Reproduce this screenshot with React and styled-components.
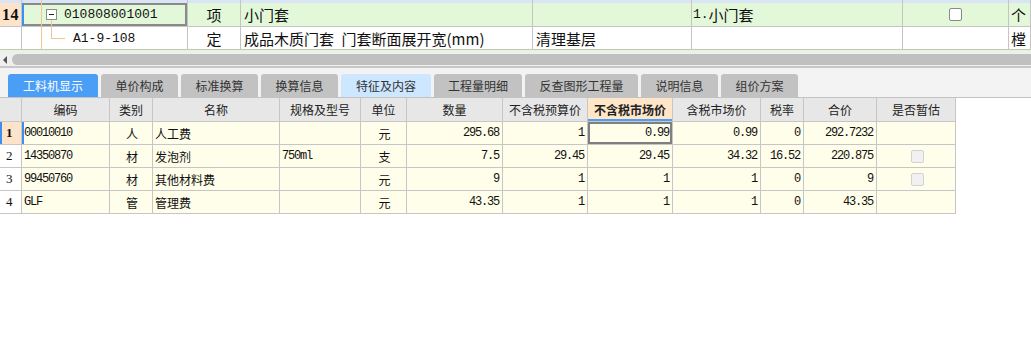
import React from 'react';
import styled, { createGlobalStyle } from 'styled-components';

const CJK = `"Noto Sans CJK SC", "Noto Sans", sans-serif`;
const MONO = `"Liberation Mono", "Noto Sans CJK SC", monospace`;

const GlobalStyle = createGlobalStyle`
  html, body { margin: 0; padding: 0; background: #fff; }
  body { font-family: ${CJK}; color: #111; }
  * { box-sizing: border-box; }
`;

const Page = styled.div`
  width: 1031px;
  height: 349px;
  overflow: hidden;
  display: flex;
  flex-direction: column;
`;

/* ---------- upper tree table ---------- */

const TreeRow = styled.div`
  display: grid;
  grid-template-columns: 22px 166px 53px 292px 159px 211px 106px 1fr;
  height: ${p => p.$h}px;
  background: ${p => p.$bg || '#fff'};
`;

const TCell = styled.div`
  position: relative;
  display: flex;
  align-items: center;
  justify-content: ${p => p.$align || 'flex-start'};
  padding: 0 0 0 ${p => p.$pl ?? 3}px;
  border-right: 1px solid #c4c4c4;
  border-bottom: ${p => (p.$nb ? 'none' : '1px solid #c4c4c4')};
  font-size: 15px;
  white-space: nowrap;
  overflow: hidden;
`;

const RowNo = styled(TCell)`
  background: #fce3c9;
  font-family: "Liberation Serif", serif;
  font-weight: bold;
  font-size: 16px;
  letter-spacing: 0.5px;
  padding-left: 2px;
`;

const CodeCell = styled(TCell)`
  box-shadow: ${p => (p.$current ? 'inset 2px 0 0 #3d8ef2, inset 0 0 0 2px #8a8a8a' : 'none')};
`;

const Mono = styled.span`
  font-family: ${MONO};
  font-size: ${p => p.$size || 13}px;
  letter-spacing: ${p => p.$ls ?? 0}px;
`;

const Line = styled.span`
  position: absolute;
  left: ${p => p.$x}px;
  top: ${p => p.$y}px;
  width: ${p => p.$w}px;
  height: ${p => p.$h}px;
  background: #f6c58e;
`;

const Collapse = styled.span`
  position: absolute;
  left: 24px;
  top: 6px;
  width: 11px;
  height: 11px;
  border: 1px solid #8c8c8c;
  background: #fff;
  &::after {
    content: '';
    position: absolute;
    left: 2px;
    top: 4px;
    width: 5px;
    height: 1px;
    background: #222;
  }
`;

const CheckBox = styled.span`
  display: inline-block;
  width: 13px;
  height: 13px;
  border: 1px solid ${p => (p.$disabled ? '#d2d2d2' : '#8a8a8a')};
  border-radius: 2px;
  background: ${p => (p.$disabled ? '#f1f1f1' : '#fff')};
`;

const Peek = styled.div`
  height: 2px;
  background: #e3f8da;
`;

const HScroll = styled.div`
  height: 16px;
  padding: 2px 0 1px 3px;
  display: flex;
  align-items: stretch;
  gap: 5px;
  background: #efefef;
  border-bottom: 2px solid #c8c8c8;
`;

const Arrow = styled.span`
  align-self: center;
  width: 0;
  height: 0;
  border-top: 4px solid transparent;
  border-bottom: 4px solid transparent;
  border-right: 4px solid #555;
`;

const Thumb = styled.div`
  flex: 1;
  background: #c0c0c0;
  border-radius: 6px 0 0 6px;
`;

/* ---------- tabs ---------- */

const TabBar = styled.div`
  height: 30px;
  padding: 6px 0 0 8px;
  display: flex;
  gap: 3px;
  background: #f3f3f3;
  border-bottom: 1px solid #c2c2c2;
`;

const tabColors = {
  active: ['#4a9ef6', '#fff'],
  light: ['#cce7ff', '#333'],
  normal: ['#c2c2c2', '#333'],
};

const Tab = styled.div`
  width: ${p => p.$w}px;
  height: 23px;
  display: flex;
  align-items: center;
  justify-content: center;
  font-size: 12px;
  border-radius: 3px 3px 0 0;
  background: ${p => tabColors[p.$kind][0]};
  color: ${p => tabColors[p.$kind][1]};
`;

/* ---------- resource grid ---------- */

const COLS = '22px 88px 43px 127px 81px 46px 96px 85px 85px 88px 43px 73px 79px';

const GridRow = styled.div`
  display: grid;
  grid-template-columns: ${COLS};
  width: 956px;
  height: ${p => p.$h}px;
`;

const HeadCell = styled.div`
  display: flex;
  align-items: center;
  justify-content: center;
  font-size: 12px;
  color: #222;
  background: ${p => (p.$sel ? '#ffe6c9' : '#e7e7e7')};
  font-weight: ${p => (p.$sel ? 'bold' : 'normal')};
  box-shadow: ${p => (p.$sel ? 'inset 0 -2px 0 #4a9ef6' : 'none')};
  border-right: 1px solid #c6c6c6;
  border-bottom: 1px solid #c6c6c6;
  white-space: nowrap;
`;

const Cell = styled.div`
  display: flex;
  align-items: center;
  justify-content: ${p => p.$align || 'flex-start'};
  padding: ${p => (p.$align === 'flex-end' ? '0 3px 0 0' : '0 0 0 2px')};
  font-size: 12px;
  background: #fffeea;
  border-right: 1px solid #c6c6c6;
  border-bottom: 1px solid #c6c6c6;
  box-shadow: ${p =>
    p.$selected ? 'inset 0 0 0 2px #7f7f7f' : p.$current ? 'inset 2px 0 0 #3d8ef2' : 'none'};
  white-space: nowrap;
  overflow: hidden;
`;

const NumCell = styled(Cell)`
  padding-left: 6px;
  background: ${p => (p.$current ? '#fce3c9' : '#fff')};
  font-family: "Liberation Serif", serif;
  font-weight: ${p => (p.$current ? 'bold' : 'normal')};
  font-size: 13px;
`;

const heads = ['', '编码', '类别', '名称', '规格及型号', '单位', '数量', '不含税预算价', '不含税市场价', '含税市场价', '税率', '合价', '是否暂估'];

const rows = [
  ['00010010', '人', '人工费', '', '元', '295.68', '1', '0.99', '0.99', '0', '292.7232', null],
  ['14350870', '材', '发泡剂', '750ml', '支', '7.5', '29.45', '29.45', '34.32', '16.52', '220.875', true],
  ['99450760', '材', '其他材料费', '', '元', '9', '1', '1', '1', '0', '9', true],
  ['GLF', '管', '管理费', '', '元', '43.35', '1', '1', '1', '0', '43.35', null],
];

const tabs = [
  ['工料机显示', 90, 'active'],
  ['单价构成', 77, 'normal'],
  ['标准换算', 77, 'normal'],
  ['换算信息', 77, 'normal'],
  ['特征及内容', 90, 'light'],
  ['工程量明细', 88, 'normal'],
  ['反查图形工程量', 113, 'normal'],
  ['说明信息', 77, 'normal'],
  ['组价方案', 77, 'normal'],
];

const N = ({ children }) => <Mono $size={12} $ls={-1.2}>{children}</Mono>;

export default function App() {
  return (
    <Page>
      <GlobalStyle />

      <TreeRow $h={3} $bg="#d9e5f7">
        <TCell $nb />
        <TCell $nb><Line $x={19} $y={0} $w={1} $h={3} /></TCell>
        <TCell $nb /><TCell $nb /><TCell $nb /><TCell $nb /><TCell $nb /><TCell $nb />
      </TreeRow>

      <TreeRow $h={24} $bg="#e2f8d9">
        <RowNo>14</RowNo>
        <CodeCell $current $pl={42}>
          <Line $x={19} $y={0} $w={1} $h={24} />
          <Line $x={29} $y={17} $w={1} $h={7} />
          <Collapse />
          <Mono>010808001001</Mono>
        </CodeCell>
        <TCell $align="center" $pl={0}>项</TCell>
        <TCell>小门套</TCell>
        <TCell />
        <TCell $pl={1}><Mono>1.</Mono>小门套</TCell>
        <TCell $align="center" $pl={0}><CheckBox /></TCell>
        <TCell $pl={2}>个</TCell>
      </TreeRow>

      <TreeRow $h={23}>
        <TCell />
        <TCell $pl={51}>
          <Line $x={19} $y={0} $w={1} $h={23} />
          <Line $x={29} $y={0} $w={1} $h={12} />
          <Line $x={29} $y={11} $w={14} $h={1} />
          <Mono>A1-9-108</Mono>
        </TCell>
        <TCell $align="center" $pl={0}>定</TCell>
        <TCell>成品木质门套{'\u2002'}门套断面展开宽(mm)</TCell>
        <TCell>清理基层</TCell>
        <TCell />
        <TCell />
        <TCell $pl={2}>樘</TCell>
      </TreeRow>

      <Peek />
      <HScroll>
        <Arrow />
        <Thumb />
      </HScroll>

      <TabBar>
        {tabs.map(([label, w, kind]) => (
          <Tab key={label} $w={w} $kind={kind}>{label}</Tab>
        ))}
      </TabBar>

      <GridRow $h={24}>
        {heads.map((h, i) => (
          <HeadCell key={i} $sel={i === 8}>{h}</HeadCell>
        ))}
      </GridRow>

      {rows.map((r, i) => (
        <GridRow key={i} $h={23}>
          <NumCell $current={i === 0}>{i + 1}</NumCell>
          <Cell $current={i === 0}><N>{r[0]}</N></Cell>
          <Cell $align="center">{r[1]}</Cell>
          <Cell>{r[2]}</Cell>
          <Cell><N>{r[3]}</N></Cell>
          <Cell $align="center">{r[4]}</Cell>
          {r.slice(5, 11).map((v, j) => (
            <Cell key={j} $align="flex-end" $selected={i === 0 && j === 2}><N>{v}</N></Cell>
          ))}
          <Cell $align="center">{r[11] && <CheckBox $disabled />}</Cell>
        </GridRow>
      ))}
    </Page>
  );
}
